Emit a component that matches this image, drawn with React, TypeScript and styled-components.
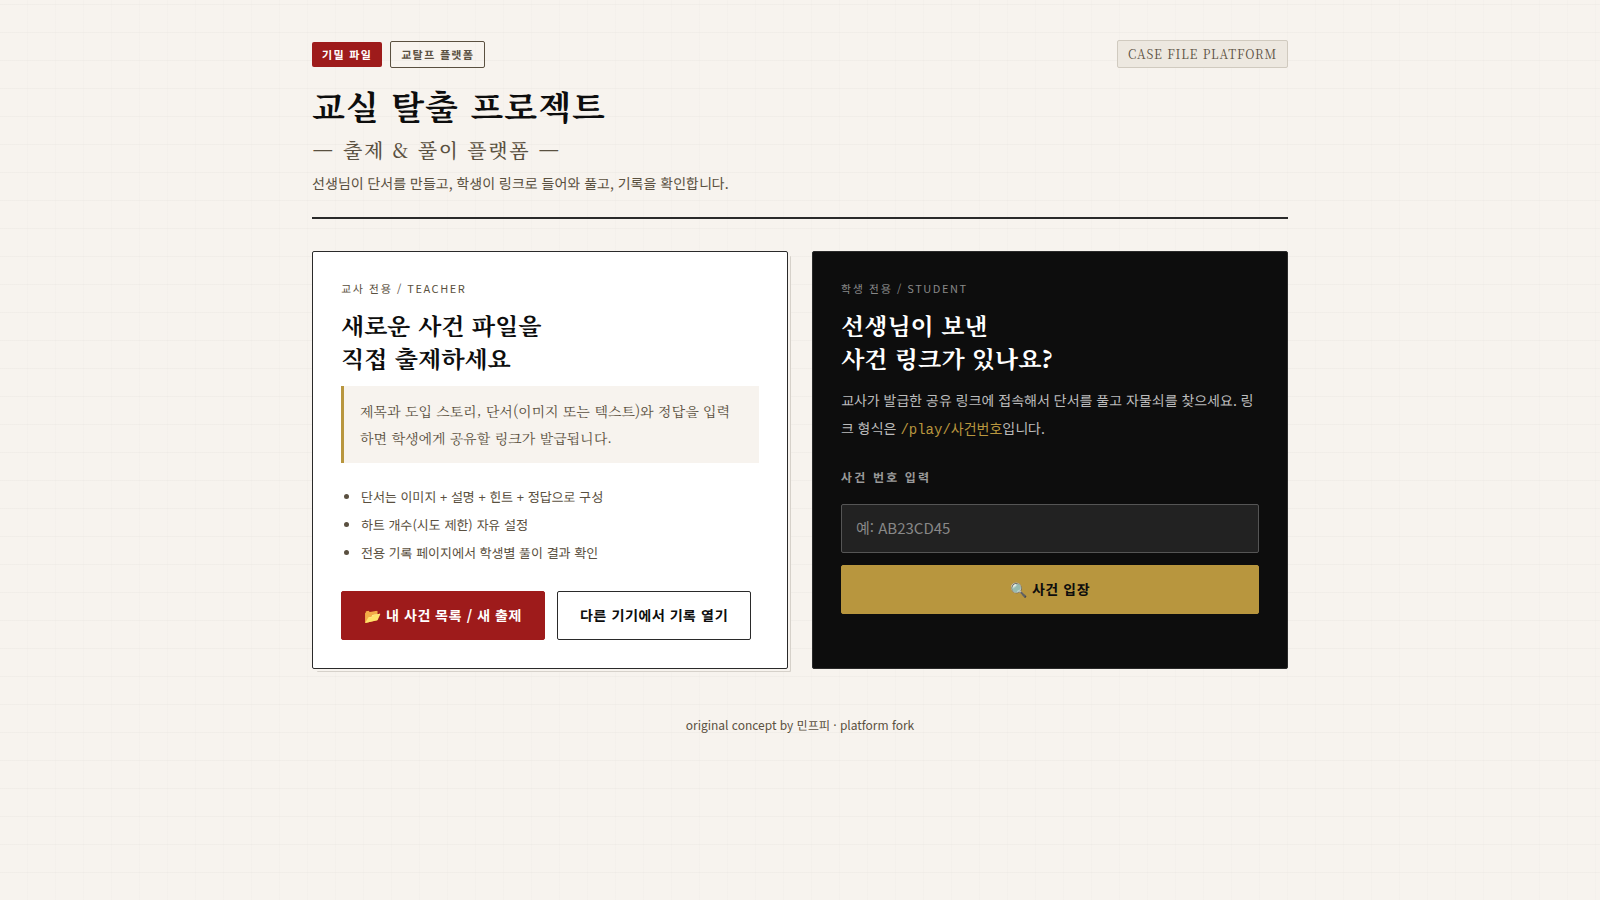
import React from "react";
import styled, { createGlobalStyle, css } from "styled-components";

const sans = `"Noto Sans KR", "Noto Sans CJK KR", sans-serif`;
const serif = `"Noto Serif KR", "Noto Serif CJK KR", serif`;

const GlobalStyle = createGlobalStyle`
  * { box-sizing: border-box; margin: 0; padding: 0; }
  body {
    min-height: 100vh;
    font-family: ${sans};
    color: #0d0d0d;
    background-color: #f7f3ee;
    background-image:
      repeating-linear-gradient(0deg, transparent, transparent 27px, rgba(0, 0, 0, 0.025) 27px, rgba(0, 0, 0, 0.025) 28px),
      repeating-linear-gradient(90deg, transparent, transparent 27px, rgba(0, 0, 0, 0.01) 27px, rgba(0, 0, 0, 0.01) 28px);
  }
`;

const Page = styled.div`
  max-width: 1040px;
  margin: 0 auto;
  padding: 40px 32px;
`;

const Header = styled.header`
  display: flex;
  justify-content: space-between;
  align-items: flex-start;
  padding-bottom: 22px;
  margin-bottom: 32px;
  border-bottom: 2px solid #2a2a2a;
`;

const Badges = styled.div`
  display: flex;
  align-items: center;
  gap: 8px;
  min-height: 29px;
  margin-bottom: 14px;
`;

const Badge = styled.span<{ $outline?: boolean }>`
  padding: 4px 10px;
  border-radius: 2px;
  font-size: 11px;
  line-height: 17px;
  font-weight: 700;
  letter-spacing: 0.12em;
  ${(p) =>
    p.$outline
      ? css`
          border: 1px solid #5a5040;
          color: #5a5040;
        `
      : css`
          background: #9e1b1b;
          color: #fff;
        `}
`;

const Title = styled.h1`
  margin-bottom: 4px;
  font-family: ${serif};
  font-size: 34px;
  line-height: 46px;
  font-weight: 700;
  letter-spacing: 1px;
`;

const Subtitle = styled.p`
  font-family: ${serif};
  font-size: 20px;
  line-height: 34px;
  font-weight: 500;
  letter-spacing: 0.08em;
  color: #5a5040;
`;

const Lead = styled.p`
  font-size: 14px;
  line-height: 24px;
  margin-top: 4px;
  color: #5a5040;
`;

const CaseTag = styled.span`
  padding: 4px 10px;
  border: 1px solid #d0cabf;
  border-radius: 2px;
  background: #ede8e0;
  font-family: ${serif};
  font-size: 12px;
  line-height: 18px;
  letter-spacing: 0.07em;
  white-space: nowrap;
  color: #5a5040;
`;

const Cards = styled.main`
  display: grid;
  grid-template-columns: repeat(2, minmax(0, 1fr));
  gap: 24px;
  @media (max-width: 800px) {
    grid-template-columns: minmax(0, 1fr);
  }
`;

const Card = styled.section<{ $dark?: boolean }>`
  padding: 28px;
  border: 1px solid #2a2a2a;
  border-radius: 2px;
  ${(p) =>
    p.$dark
      ? css`
          background: #0d0d0d;
          color: #fff;
        `
      : css`
          background: #fff;
          box-shadow: 3px 3px 0 -1px #f7f3ee, 4px 4px 0 -1px #d6d1ca;
        `}
`;

const Eyebrow = styled.p<{ $dark?: boolean }>`
  font-size: 11px;
  line-height: 16px;
  letter-spacing: 0.14em;
  color: ${(p) => (p.$dark ? "#888" : "#5a5040")};
`;

const CardTitle = styled.h2`
  margin: 12px 0;
  font-family: ${serif};
  font-size: 24px;
  line-height: 33px;
  font-weight: 700;
`;

const Quote = styled.p`
  padding: 12px 16px 11px;
  border-left: 3px solid #b8963e;
  background: #f7f3ee;
  font-family: ${serif};
  font-size: 14px;
  line-height: 27px;
  color: #5a5040;
`;

const Features = styled.ul`
  margin: 20px 0 24px;
  padding-left: 20px;
  font-size: 13px;
  line-height: 28px;
  color: #5a5040;
`;

const Actions = styled.div`
  display: flex;
  flex-wrap: wrap;
  gap: 12px;
`;

const tones = {
  red: css`
    background: #9e1b1b;
    border-color: #9e1b1b;
    color: #fff;
  `,
  plain: css`
    background: #fff;
    border-color: #2a2a2a;
    color: #0d0d0d;
  `,
  gold: css`
    width: 100%;
    background: #b8963e;
    border-color: #b8963e;
    color: #0d0d0d;
  `,
};

const Button = styled.button<{ $tone: keyof typeof tones }>`
  padding: 12px 22px;
  border: 1px solid;
  border-radius: 2px;
  font-family: inherit;
  font-size: 14px;
  line-height: 23px;
  font-weight: 700;
  letter-spacing: 0.04em;
  cursor: pointer;
  ${(p) => tones[p.$tone]}
`;

const Description = styled.p`
  font-size: 14px;
  line-height: 28px;
  color: #bbb;
`;

const Code = styled.code`
  font-family: "Liberation Mono", "Noto Sans CJK KR", monospace;
  font-size: 14px;
  color: #b8963e;
`;

const Label = styled.label`
  display: block;
  margin: 24px 0 18px;
  font-size: 12px;
  line-height: 18px;
  font-weight: 700;
  letter-spacing: 0.18em;
  color: #999;
`;

const Input = styled.input`
  display: block;
  width: 100%;
  margin-bottom: 12px;
  padding: 11px 14px 13px;
  border: 1px solid #555;
  border-radius: 2px;
  background: #222;
  font-family: inherit;
  font-size: 15px;
  line-height: 23px;
  color: #fff;
  &::placeholder {
    color: #888;
  }
`;

const Footer = styled.footer`
  margin-top: 48px;
  text-align: center;
  font-size: 12px;
  line-height: 16px;
  color: #5a5040;
`;

export default function App() {
  return (
    <>
      <GlobalStyle />
      <Page lang="ko">
        <Header>
          <div>
            <Badges>
              <Badge>기밀 파일</Badge>
              <Badge $outline>교탈프 플랫폼</Badge>
            </Badges>
            <Title>교실 탈출 프로젝트</Title>
            <Subtitle>— 출제 &amp; 풀이 플랫폼 —</Subtitle>
            <Lead>선생님이 단서를 만들고, 학생이 링크로 들어와 풀고, 기록을 확인합니다.</Lead>
          </div>
          <CaseTag>CASE FILE PLATFORM</CaseTag>
        </Header>
        <Cards>
          <Card>
            <Eyebrow>교사 전용 / TEACHER</Eyebrow>
            <CardTitle>
              새로운 사건 파일을
              <br />
              직접 출제하세요
            </CardTitle>
            <Quote>
              제목과 도입 스토리, 단서(이미지 또는 텍스트)와 정답을 입력하면 학생에게 공유할 링크가 발급됩니다.
            </Quote>
            <Features>
              <li>단서는 이미지 + 설명 + 힌트 + 정답으로 구성</li>
              <li>하트 개수(시도 제한) 자유 설정</li>
              <li>전용 기록 페이지에서 학생별 풀이 결과 확인</li>
            </Features>
            <Actions>
              <Button $tone="red">📂 내 사건 목록 / 새 출제</Button>
              <Button $tone="plain">다른 기기에서 기록 열기</Button>
            </Actions>
          </Card>
          <Card $dark>
            <Eyebrow $dark>학생 전용 / STUDENT</Eyebrow>
            <CardTitle>
              선생님이 보낸
              <br />
              사건 링크가 있나요?
            </CardTitle>
            <Description>
              교사가 발급한 공유 링크에 접속해서 단서를 풀고 자물쇠를 찾으세요. 링크 형식은{" "}
              <Code>/play/사건번호</Code>입니다.
            </Description>
            <form onSubmit={(e) => e.preventDefault()}>
              <Label htmlFor="case-code">사건 번호 입력</Label>
              <Input id="case-code" placeholder="예: AB23CD45" />
              <Button $tone="gold">🔍 사건 입장</Button>
            </form>
          </Card>
        </Cards>
        <Footer>original concept by 민프피 · platform fork</Footer>
      </Page>
    </>
  );
}
